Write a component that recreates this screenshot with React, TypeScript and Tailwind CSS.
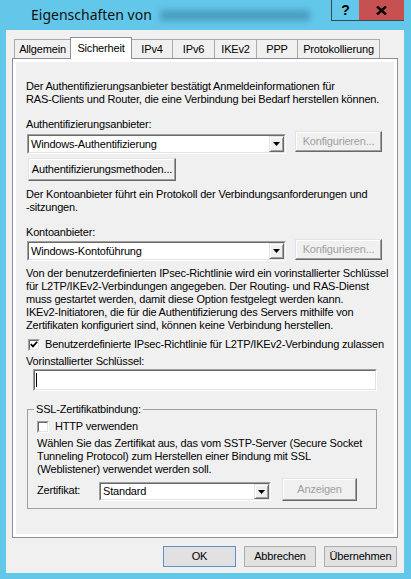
import React from 'react'

const font = "font-['Liberation_Sans',Arial,sans-serif]"

function DropArrow() {
  return (
    <div className="w-[15px] h-full bg-[#f0f0f0] border border-t-[#e3e3e3] border-l-[#e3e3e3] border-b-[#696969] border-r-[#696969] shadow-[inset_1px_1px_0_#fff,inset_-1px_-1px_0_#a0a0a0] flex items-center justify-center">
      <svg width="7" height="4" viewBox="0 0 7 4">
        <path d="M0 0h7L3.5 4z" fill="#000" />
      </svg>
    </div>
  )
}

function Combo({ value, className }: { value: string; className: string }) {
  return (
    <div className={`flex bg-white border border-t-[#a0a0a0] border-l-[#a0a0a0] border-b-white border-r-white ${className}`}>
      <div className="flex flex-1 min-w-0 border border-t-[#696969] border-l-[#696969] border-b-[#e3e3e3] border-r-[#e3e3e3]">
        <div className="flex-1 flex items-center pl-[2px] whitespace-nowrap">{value}</div>
        <DropArrow />
      </div>
    </div>
  )
}

function Btn({
  children,
  disabled,
  className,
}: {
  children: React.ReactNode
  disabled?: boolean
  className: string
}) {
  return (
    <div
      className={`flex items-center justify-center whitespace-nowrap bg-[#f0f0f0] border border-t-[#e3e3e3] border-l-[#e3e3e3] border-b-[#696969] border-r-[#696969] shadow-[inset_-1px_-1px_0_#a0a0a0,inset_1px_1px_0_#fff] ${
        disabled ? 'text-[#a0a0a0]' : 'text-black'
      } ${className}`}
    >
      {children}
    </div>
  )
}

function CheckBox({ checked }: { checked?: boolean }) {
  return (
    <div className="w-[12px] h-[12px] shrink-0 bg-white border border-t-[#a0a0a0] border-l-[#a0a0a0] border-b-white border-r-white">
      <div className="w-full h-full border border-t-[#696969] border-l-[#696969] border-b-[#e3e3e3] border-r-[#e3e3e3] flex items-center justify-center">
        {checked && (
          <svg width="8" height="7" viewBox="0 0 8 7">
            <polyline points="0.8,3.2 3,5.4 7.2,0.8" fill="none" stroke="#000" strokeWidth="1.7" />
          </svg>
        )}
      </div>
    </div>
  )
}

function Lines({ lines, className = '' }: { lines: string[]; className?: string }) {
  return (
    <div className={className}>
      {lines.map((l) => (
        <div key={l} className="whitespace-nowrap">
          {l}
        </div>
      ))}
    </div>
  )
}

const tabs = [
  { label: 'Allgemein', w: 'w-[57px]' },
  { label: 'Sicherheit', w: 'w-[62px]', active: true },
  { label: 'IPv4', w: 'w-[42px]' },
  { label: 'IPv6', w: 'w-[43px]' },
  { label: 'IKEv2', w: 'w-[43px]' },
  { label: 'PPP', w: 'w-[42px]' },
  { label: 'Protokollierung', w: 'w-[83px]' },
]

export default function App() {
  return (
    <div className={`w-[411px] h-[579px] bg-[#63c7ea] overflow-hidden flex flex-col ${font} text-[11px] leading-[13px] tracking-[-0.18px] text-black`}>
      {/* title bar */}
      <div className="h-[30px] flex items-start shrink-0">
        <div className="flex items-center pl-[31px] pt-[6px]">
          <span className="text-[14px] leading-[18px] tracking-normal font-['Noto_Sans',sans-serif] text-[#111]">
            Eigenschaften von
          </span>
          <div className="ml-[8px] w-[150px] h-[11px] rounded-[3px] bg-[#4a9ec0] blur-[3px]" />
        </div>
        <div className="ml-auto mr-[7px] flex h-[21px] border-l border-b border-[#3b4a52]">
          <div className="w-[27px] flex items-center justify-center font-bold text-[14px] tracking-normal">?</div>
          <div className="w-[45px] bg-[#c75050] flex items-center justify-center">
            <svg width="11" height="9" viewBox="0 0 11 9">
              <path d="M1 0.5L10 8.5M10 0.5L1 8.5" stroke="#000" strokeWidth="2.4" />
            </svg>
          </div>
        </div>
      </div>

      {/* dialog body */}
      <div className="ml-[6px] mr-[7px] h-[543px] bg-[#f0f0f0] flex flex-col">
        {/* tabs */}
        <div className="flex items-end h-[28px] pt-[7px] pl-[8px]">
          {tabs.map((t, i) =>
            t.active ? (
              <div
                key={t.label}
                className={`${t.w} h-[22px] -mb-[1px] relative z-10 bg-white border border-b-0 border-[#8e8f94] flex justify-center pt-[4px] ${i > 0 ? '-ml-[1px]' : ''}`}
              >
                {t.label}
              </div>
            ) : (
              <div
                key={t.label}
                className={`${t.w} h-[19px] bg-[#f0f0f0] border border-b-0 border-[#a9a9ae] flex justify-center pt-[3px] ${i > 0 ? '-ml-[1px]' : ''}`}
              >
                {t.label}
              </div>
            ),
          )}
        </div>

        {/* tab panel */}
        <div className="ml-[6px] w-[386px] h-[480px] border border-[#8e8f94] bg-white p-[3px]">
          <div className="h-full bg-[#f0f0f0] pl-[10px] flex flex-col">
            <Lines
              className="mt-[18px]"
              lines={[
                'Der Authentifizierungsanbieter bestätigt Anmeldeinformationen für',
                'RAS-Clients und Router, die eine Verbindung bei Bedarf herstellen können.',
              ]}
            />
            <div className="mt-[12px]">Authentifizierungsanbieter:</div>
            <div className="flex items-start">
              <Combo value="Windows-Authentifizierung" className="mt-[3px] ml-[1px] w-[259px] h-[20px]" />
              <Btn disabled className="ml-[9px] w-[87px] h-[21px]">
                Konfigurieren...
              </Btn>
            </div>
            <Btn className="mt-[4px] ml-[2px] w-[148px] h-[23px]">Authentifizierungsmethoden...</Btn>
            <Lines
              className="mt-[7px]"
              lines={['Der Kontoanbieter führt ein Protokoll der Verbindungsanforderungen und', '-sitzungen.']}
            />
            <div className="mt-[12px]">Kontoanbieter:</div>
            <div className="flex items-start">
              <Combo value="Windows-Kontoführung" className="mt-[2px] ml-[1px] w-[259px] h-[20px]" />
              <Btn disabled className="ml-[9px] w-[87px] h-[21px]">
                Konfigurieren...
              </Btn>
            </div>
            <Lines
              className="mt-[6px]"
              lines={[
                'Von der benutzerdefinierten IPsec-Richtlinie wird ein vorinstallierter Schlüssel',
                'für L2TP/IKEv2-Verbindungen angegeben. Der Routing- und RAS-Dienst',
                'muss gestartet werden, damit diese Option festgelegt werden kann.',
                'IKEv2-Initiatoren, die für die Authentifizierung des Servers mithilfe von',
                'Zertifikaten konfiguriert sind, können keine Verbindung herstellen.',
              ]}
            />
            <div className="mt-[6px] flex items-center ml-[2px]">
              <CheckBox checked />
              <span className="ml-[5px]">Benutzerdefinierte IPsec-Richtlinie für L2TP/IKEv2-Verbindung zulassen</span>
            </div>
            <div className="mt-[4px]">Vorinstallierter Schlüssel:</div>
            <div className="mt-[1px] ml-[7px] w-[344px] h-[22px] bg-white border border-t-[#a0a0a0] border-l-[#a0a0a0] border-b-white border-r-white">
              <div className="h-full border border-t-[#696969] border-l-[#696969] border-b-[#e3e3e3] border-r-[#e3e3e3] flex items-center">
                <div className="ml-[1px] w-[1px] h-[14px] bg-black" />
              </div>
            </div>

            <fieldset className="mt-[12px] ml-[1px] w-[350px] border border-[#a0a0a0] pb-[7px]">
              <legend className="ml-[6px] px-[2px]">SSL-Zertifikatbindung:</legend>
              <div className="mt-[4px] ml-[9px] flex items-center">
                <CheckBox />
                <span className="ml-[6px]">HTTP verwenden</span>
              </div>
              <Lines
                className="mt-[4px] ml-[9px]"
                lines={[
                  'Wählen Sie das Zertifikat aus, das vom SSTP-Server (Secure Socket',
                  'Tunneling Protocol) zum Herstellen einer Bindung mit SSL',
                  '(Weblistener) verwendet werden soll.',
                ]}
              />
              <div className="mt-[2px] ml-[9px] flex items-start">
                <div className="w-[62px] mt-[6px]">Zertifikat:</div>
                <Combo value="Standard" className="mt-[4px] w-[172px] h-[19px]" />
                <Btn disabled className="ml-[11px] w-[75px] h-[23px]">
                  Anzeigen
                </Btn>
              </div>
            </fieldset>
          </div>
        </div>

        {/* dialog buttons */}
        <div className="mt-[8px] pr-[7px] flex justify-end gap-[8px]">
          <div className="w-[73px] h-[21px] bg-[#e1e1e1] border border-[#5c93c6] flex items-center justify-center">OK</div>
          <div className="w-[72px] h-[21px] bg-[#e1e1e1] border border-[#adadad] flex items-center justify-center">Abbrechen</div>
          <div className="w-[73px] h-[21px] bg-[#e1e1e1] border border-[#adadad] flex items-center justify-center">Übernehmen</div>
        </div>
      </div>
    </div>
  )
}
